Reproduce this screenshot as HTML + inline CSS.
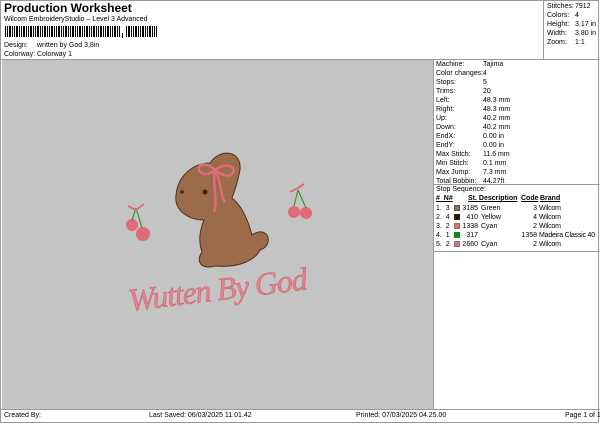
<!DOCTYPE html><html><head><style>
body{margin:0;width:600px;height:424px;background:#fff;font-family:"Liberation Sans",sans-serif;font-size:7px;color:#000;position:relative;overflow:hidden}
div{position:absolute;white-space:nowrap}
.l{line-height:9px}
</style></head><body>
<div style="left:0;top:0;width:599px;height:423px;border:1px solid #999;box-sizing:border-box"></div>
<div style="left:4px;top:1px;font-size:12px;font-weight:bold">Production Worksheet</div>
<div style="left:4px;top:16px;font-size:7px">Wilcom EmbroideryStudio – Level 3 Advanced</div>
<div style="left:5px;top:26px;width:152px;height:11px;background:repeating-linear-gradient(90deg,#000 0 1px,#fff 1px 2px,#000 2px 3px,#fff 3px 4px,#000 4px 6px,#fff 6px 7px)"></div>
<div style="left:120px;top:26px;width:6px;height:12px;background:#fff"></div>
<div style="left:122px;top:33px;width:1px;height:5px;background:#000"></div>
<div style="left:4px;top:42px">Design:</div><div style="left:37px;top:42px">written by God 3,8in</div>
<div style="left:4px;top:51px">Colorway:</div><div style="left:37px;top:51px">Colorway 1</div>
<div style="left:543px;top:0;width:1px;height:59px;background:#999"></div>
<div class="l" style="left:547px;top:2px">Stitches:<br>Colors:<br>Height:<br>Width:<br>Zoom:</div>
<div class="l" style="left:575px;top:2px">7912<br>4<br>3.17 in<br>3.80 in<br>1:1</div>
<div style="left:0;top:59px;width:600px;height:1px;background:#999"></div>
<div style="left:2px;top:60px;width:431px;height:349px;background:#c4c4c4"></div>
<div style="left:433px;top:60px;width:1px;height:350px;background:#999"></div>
<div class="l" style="left:436px;top:60px">Machine:<br>Color changes:<br>Stops:<br>Trims:<br>Left:<br>Right:<br>Up:<br>Down:<br>EndX:<br>EndY:<br>Max Stitch:<br>Min Stitch:<br>Max Jump:<br>Total Bobbin:</div>
<div class="l" style="left:483px;top:60px">Tajima<br>4<br>5<br>20<br>48.3 mm<br>48.3 mm<br>40.2 mm<br>40.2 mm<br>0.00 in<br>0.00 in<br>11.6 mm<br>0.1 mm<br>7.3 mm<br>44.27ft</div>
<div style="left:434px;top:184px;width:166px;height:1px;background:#999"></div>
<div style="left:436px;top:186px">Stop Sequence:</div>
<div style="left:436px;top:195px;font-weight:bold;text-decoration:underline">#&nbsp; N#</div>
<div style="left:468px;top:195px;font-weight:bold;text-decoration:underline">St. Description</div>
<div style="left:521px;top:195px;font-weight:bold;text-decoration:underline">Code</div>
<div style="left:540px;top:195px;font-weight:bold;text-decoration:underline">Brand</div>
<div class="l" style="left:436px;top:204px">1.&nbsp; 3<br>2.&nbsp; 4<br>3.&nbsp; 2<br>4.&nbsp; 1<br>5.&nbsp; 2</div>
<div style="left:454px;top:205px;width:6px;height:6px;background:#a0704d;border:1px solid #555;box-sizing:border-box"></div>
<div style="left:454px;top:214px;width:6px;height:6px;background:#2a1a14"></div>
<div style="left:454px;top:223px;width:6px;height:6px;background:#e86a78;border:1px solid #777;box-sizing:border-box"></div>
<div style="left:454px;top:232px;width:6px;height:6px;background:#0a8a1a"></div>
<div style="left:454px;top:241px;width:6px;height:6px;background:#e86a78;border:1px solid #777;box-sizing:border-box"></div>
<div class="l" style="left:460px;top:204px;width:18px;text-align:right">3185<br>410<br>1338<br>317<br>2660</div>
<div class="l" style="left:481px;top:204px">Green<br>Yellow<br>Cyan<br><br>Cyan</div>
<div class="l" style="left:515px;top:204px;width:22px;text-align:right">3<br>4<br>2<br>1358<br>2</div>
<div class="l" style="left:539px;top:204px;letter-spacing:-0.2px">Wilcom<br>Wilcom<br>Wilcom<br>Madeira Classic 40<br>Wilcom</div>
<div style="left:434px;top:251px;width:166px;height:1px;background:#999"></div>
<div style="left:0;top:409px;width:600px;height:1px;background:#999"></div>
<div style="left:4px;top:412px">Created By:</div>
<div style="left:149px;top:412px">Last Saved: 06/03/2025 11.01.42</div>
<div style="left:356px;top:412px">Printed: 07/03/2025 04.25.00</div>
<div style="left:565px;top:412px">Page 1 of 1</div>
<svg style="position:absolute;left:110px;top:140px" width="220" height="180" viewBox="0 0 220 180">
<path d="M100 23 C110 8 132 10 130 30 C128 40 125 50 122 58 C132 66 138 80 142 95 C158 84 165 105 150 110 C145 120 130 128 105 126 C92 130 85 122 92 112 C88 100 90 90 94 80 C78 80 64 70 66 55 C68 35 84 23 100 23Z" fill="#9b6b4a" stroke="#4a3020" stroke-width="1"/>
<circle cx="95" cy="52" r="2.5" fill="#3a2418"/>
<circle cx="72" cy="52" r="1.8" fill="#3a2418"/>
<path d="M105 30 C95 20 85 25 90 32 C95 36 100 34 105 30 C115 22 128 26 122 34 C118 38 110 34 105 30 M105 30 C102 45 108 58 104 72 M106 32 C112 44 110 56 115 62" stroke="#e06c78" stroke-width="2.5" fill="none"/>
<circle cx="22" cy="85" r="6" fill="#e06c78"/><circle cx="33" cy="94" r="7" fill="#e06c78"/>
<path d="M26 68 L22 80 M26 68 L32 88" stroke="#2a9a2a" stroke-width="1.2"/>
<path d="M18 66 L26 70 L34 64" stroke="#e06c78" stroke-width="2" fill="none"/>
<circle cx="184" cy="72" r="6" fill="#e06c78"/><circle cx="196" cy="73" r="6" fill="#e06c78"/>
<path d="M188 50 L184 66 M188 50 L196 68" stroke="#2a9a2a" stroke-width="1.2"/>
<path d="M180 52 L188 48 L194 44" stroke="#e06c78" stroke-width="2" fill="none"/>
<text x="18" y="160" font-family="Liberation Serif,serif" font-style="italic" font-size="32" fill="#e8818b" stroke="#b85560" stroke-width="0.4" textLength="180" transform="rotate(-7 110 150)">Wutten By God</text>
</svg>
</body></html>
